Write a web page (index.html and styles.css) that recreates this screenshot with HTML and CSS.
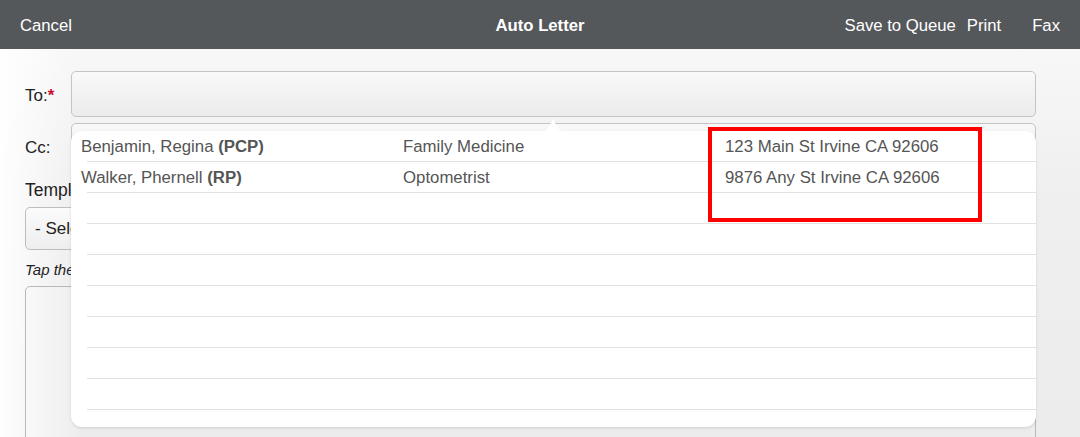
FILE: index.html
```html
<!DOCTYPE html>
<html lang="en">
<head>
    <meta charset="UTF-8">
    <meta name="viewport" content="width=device-width, initial-scale=1.0">
    <title>Auto Letter</title>
    <link rel="stylesheet" href="styles.css">
</head>
<body>
    <div class="page">
        <!-- Top navigation bar -->
        <header class="navbar">
            <span class="nav-btn">Cancel</span>
            <span class="nav-title">Auto Letter</span>
            <div class="nav-actions">
                <span class="nav-btn">Save to Queue</span>
                <span class="nav-btn">Print</span>
                <span class="nav-btn fax">Fax</span>
            </div>
        </header>

        <!-- Letter form -->
        <main class="form">
            <div class="field-row">
                <label class="field-label">To:<span class="required">*</span></label>
                <div class="text-field"></div>
            </div>
            <div class="field-row cc-row">
                <label class="field-label">Cc:</label>
                <div class="text-field"></div>
            </div>

            <div class="block-label">Template</div>
            <div class="select-field">- Select Template -</div>

            <p class="hint">Tap the letter body below to edit it.</p>
            <div class="letter-body"></div>
        </main>

        <!-- Recipient picker popover -->
        <div class="popover">
            <svg class="popover-arrow" width="32" height="14" viewBox="0 0 32 14">
                <path d="M0 14 C8 14 10 12 13 7 L16 1 L19 7 C22 12 24 14 32 14 Z" fill="#fff"/>
            </svg>
            <ul class="recipient-list">
                <li class="recipient">
                    <span>Benjamin, Regina <b>(PCP)</b></span>
                    <span>Family Medicine</span>
                    <span>123 Main St Irvine CA 92606</span>
                </li>
                <li class="recipient">
                    <span>Walker, Phernell <b>(RP)</b></span>
                    <span>Optometrist</span>
                    <span>9876 Any St Irvine CA 92606</span>
                </li>
                <li class="recipient"></li>
                <li class="recipient"></li>
                <li class="recipient"></li>
                <li class="recipient"></li>
                <li class="recipient"></li>
                <li class="recipient"></li>
                <li class="recipient"></li>
            </ul>
        </div>

        <!-- Highlight annotation -->
        <div class="highlight"></div>
    </div>
</body>
</html>
```

FILE: styles.css
```css
body {
    margin: 0;
    font-family: "Liberation Sans", Arial, sans-serif;
    color: #222;
    overflow: hidden;
}

.page {
    position: relative;
    height: 437px;
    background:
        linear-gradient(90deg, rgba(255, 255, 255, 0.95) 0, rgba(255, 255, 255, 0) 75px),
        linear-gradient(180deg, #fafafa 0, #efefef 200px, #ececec 100%);
    overflow: hidden;
}

.navbar {
    height: 49px;
    box-sizing: border-box;
    padding: 3px 20px 0;
    background-color: #55585b;
    color: #fff;
    display: flex;
    align-items: center;
    justify-content: space-between;
    font-size: 16.7px;
    position: relative;
}

.nav-title {
    position: absolute;
    left: 0;
    right: 0;
    text-align: center;
    font-weight: bold;
    pointer-events: none;
}

.nav-actions {
    display: flex;
    gap: 11px;
}

.nav-actions .fax {
    margin-left: 20px;
}

.form {
    padding: 22px 44px 0 25px;
}

.field-row {
    display: flex;
    align-items: center;
    height: 46px;
}

.cc-row {
    margin-top: 6px;
}

.field-label {
    width: 46px;
    padding-top: 3px;
    font-size: 17px;
}

.required {
    color: #c8102e;
    font-weight: bold;
}

.text-field {
    flex: 1;
    height: 100%;
    box-sizing: border-box;
    border: 1px solid #c4c4c4;
    border-radius: 5px;
    background: linear-gradient(180deg, #f9f9f9, #ebebeb);
}

.block-label {
    margin-top: 11px;
    line-height: 20px;
    font-size: 17.5px;
}

.select-field {
    margin-top: 7px;
    height: 43px;
    box-sizing: border-box;
    border: 1px solid #bdbdbd;
    border-radius: 5px;
    padding: 0 9px;
    line-height: 41px;
    font-size: 17px;
    background: linear-gradient(180deg, #fbfbfb, #eeeeee);
}

.hint {
    margin: 11px 0 0;
    line-height: 17px;
    font-size: 15px;
    font-style: italic;
}

.letter-body {
    margin-top: 8px;
    height: 200px;
    box-sizing: border-box;
    border: 1px solid #b8b8b8;
    border-radius: 5px;
    background: linear-gradient(90deg, #f9f9f9, #ececec 60px);
}

.popover {
    position: absolute;
    left: 71px;
    top: 131px;
    width: 965px;
    height: 296px;
    background-color: #fff;
    border-radius: 11px;
    box-shadow: 0 1px 3px rgba(0, 0, 0, 0.12);
}

.popover-arrow {
    position: absolute;
    left: 466px;
    top: -13px;
    display: block;
}

.recipient-list {
    list-style: none;
    margin: 0;
    padding: 0;
}

.recipient {
    position: relative;
    height: 31px;
    display: grid;
    grid-template-columns: 322px 322px 1fr;
    align-items: center;
    padding: 1px 0 0 10px;
    box-sizing: border-box;
    font-size: 16.8px;
    color: #555;
}

.recipient::after {
    content: "";
    position: absolute;
    left: 16px;
    right: 0;
    bottom: 0;
    height: 1px;
    background-color: #e2e2e2;
}

.recipient b {
    color: #555;
}

.highlight {
    position: absolute;
    left: 708px;
    top: 127px;
    width: 274px;
    height: 95px;
    box-sizing: border-box;
    border: 4px solid #ff0000;
}
```
